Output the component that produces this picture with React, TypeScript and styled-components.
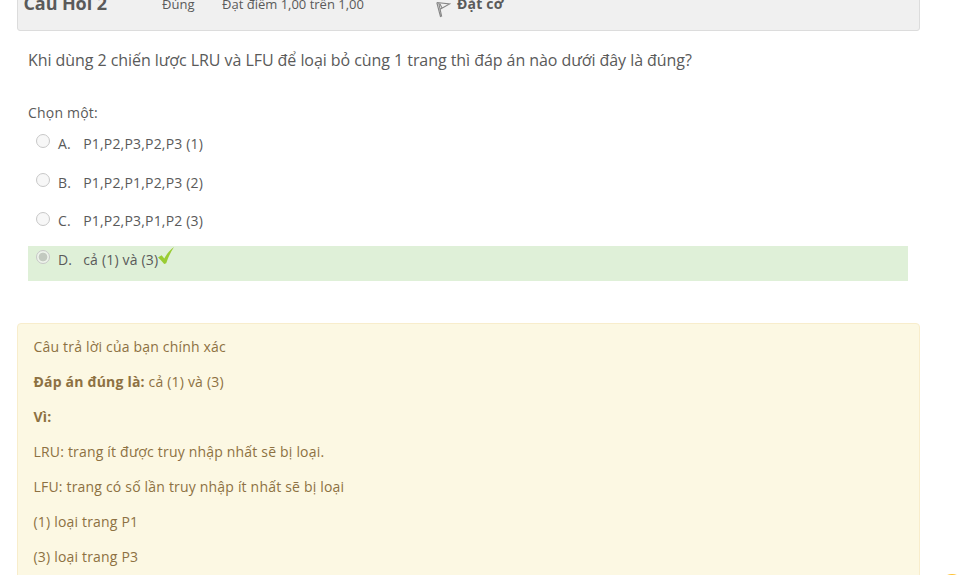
import React from "react";
import styled, { createGlobalStyle } from "styled-components";

const GlobalStyle = createGlobalStyle`
  * { box-sizing: border-box; }
  html, body { margin: 0; padding: 0; background: #fff; }
`;

const Page = styled.div`
  position: relative;
  width: 976px;
  height: 575px;
  overflow: hidden;
  padding-left: 17px;
  font: 14px/20px "Open Sans", "Noto Sans", sans-serif;
  letter-spacing: 0.19px;
  color: #5a5a5a;
`;

const Header = styled.header`
  display: grid;
  grid-template-columns: 138.5px 60px 214px 1fr;
  align-items: baseline;
  width: 903px;
  height: 61px;
  margin-top: -30px;
  padding: 22.5px 0 0 5.5px;
  background: #f0f0f0;
  border: 1px solid #dcdcdc;
  border-radius: 3px;
`;

const QuestionNumber = styled.h3`
  align-self: start;
  margin: -0.5px 0 0;
  font-size: 18px;
  line-height: 20px;
  font-weight: 700;
  letter-spacing: -0.1px;
`;

const HeaderText = styled.span`
  font-size: 13px;
  letter-spacing: 0;
  white-space: nowrap;
`;

const FlagLink = styled.span`
  display: flex;
  align-items: baseline;
  gap: 6px;
  font-weight: 700;
  svg { align-self: flex-start; margin-top: 7px; flex: none; }
`;

const Question = styled.p`
  margin: 19px 0 0 11px;
  font-size: 16px;
  line-height: 20px;
  letter-spacing: -0.06px;
  white-space: nowrap;
`;

const Prompt = styled.p`
  margin: 33px 0 0 11px;
  line-height: 20px;
`;

const Answers = styled.div`
  display: flex;
  flex-direction: column;
  gap: 3.6px;
  width: 880px;
  margin: 7.2px 0 0 11px;
`;

const Answer = styled.label<{ $correct?: boolean }>`
  display: grid;
  grid-template-columns: 22px 25.2px auto auto 1fr;
  align-items: start;
  height: 35px;
  padding: 4px 0 0 8px;
  background: ${(p) => (p.$correct ? "#dff0d8" : "transparent")};
`;

const AnswerText = styled.span`
  margin-top: -0.2px;
  white-space: nowrap;
`;

const Radio = styled.span<{ $checked?: boolean }>`
  width: 14px;
  height: 14px;
  margin-top: 0.2px;
  border: 1px solid #c8c8c8;
  border-radius: 50%;
  background: ${(p) =>
    p.$checked ? "radial-gradient(circle, #c3cac0 0 4px, #edf3ea 4.7px)" : "#f7f7f7"};
`;

const Feedback = styled.section`
  display: flex;
  flex-direction: column;
  gap: 15px;
  width: 903px;
  height: 290px;
  margin-top: 42px;
  padding: 13px 15.5px;
  background: #fcf8e3;
  border: 1px solid #f8edcc;
  border-radius: 4px;
  color: #8d7142;
  p { margin: 0; }
`;

const ChatBubble = styled.div`
  position: absolute;
  left: 940px;
  top: 573.5px;
  width: 24px;
  height: 24px;
  border-radius: 50%;
  background: #ffc233;
`;

const FlagIcon = () => (
  <svg width="15" height="17" viewBox="0 0 15 17" fill="none" stroke="#858585" strokeWidth="1.1">
    <path d="M.8 1.5 4.6 16M2.7 2 5.7 15.6M.8 1.5 13.6 3 4.5 8M4 3l2 4" />
  </svg>
);

const CheckIcon = () => (
  <svg width="16" height="17" viewBox="0 0 16 17">
    <path d="M0 10.4 3.6 8.2l2.7 3.3C8.6 7 11.7 3.2 16 0c-3 4.5-5.5 9.5-7.8 16.2L6.2 17Q3.3 13 0 10.4Z" fill="#99cc33" />
  </svg>
);

const CheckSlot = styled.span`
  height: 17px;
  margin-top: -3px;
  line-height: 0;
`;

const choices = [
  { letter: "A.", text: "P1,P2,P3,P2,P3 (1)" },
  { letter: "B.", text: "P1,P2,P1,P2,P3 (2)" },
  { letter: "C.", text: "P1,P2,P3,P1,P2 (3)" },
  { letter: "D.", text: "cả (1) và (3)", correct: true },
];

export default function App() {
  return (
    <>
      <GlobalStyle />
      <Page>
        <Header>
          <QuestionNumber>Câu Hỏi 2</QuestionNumber>
          <HeaderText>Đúng</HeaderText>
          <HeaderText>Đạt điểm 1,00 trên 1,00</HeaderText>
          <FlagLink>
            <FlagIcon />
            Đặt cờ
          </FlagLink>
        </Header>
        <Question>Khi dùng 2 chiến lược LRU và LFU để loại bỏ cùng 1 trang thì đáp án nào dưới đây là đúng?</Question>
        <Prompt>Chọn một:</Prompt>
        <Answers>
          {choices.map((c) => (
            <Answer key={c.letter} $correct={c.correct}>
              <Radio $checked={c.correct} />
              <AnswerText>{c.letter}</AnswerText>
              <AnswerText>{c.text}</AnswerText>
              {c.correct && (
                <CheckSlot>
                  <CheckIcon />
                </CheckSlot>
              )}
            </Answer>
          ))}
        </Answers>
        <Feedback>
          <p>Câu trả lời của bạn chính xác</p>
          <p><b>Đáp án đúng là:</b> cả (1) và (3)</p>
          <p><b>Vì:</b></p>
          <p>LRU: trang ít được truy nhập nhất sẽ bị loại.</p>
          <p>LFU: trang có số lần truy nhập ít nhất sẽ bị loại</p>
          <p>(1) loại trang P1</p>
          <p>(3) loại trang P3</p>
        </Feedback>
        <ChatBubble />
      </Page>
    </>
  );
}
